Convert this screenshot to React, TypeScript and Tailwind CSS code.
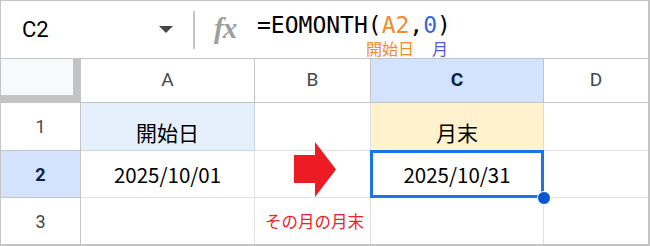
import React from 'react';

const ui = { fontFamily: 'Roboto, "Liberation Sans", sans-serif' };
const cjk = { fontFamily: '"Noto Sans CJK JP", sans-serif' };

function ColHead({ label, active }: { label: string; active?: boolean }) {
  return (
    <div
      className={`flex items-center justify-center border-r border-b border-[#c4c4c4] text-[19px] ${
        active ? 'bg-[#d3e3fd] font-bold text-[#0b1f4d]' : 'bg-white text-[#444746]'
      }`}
      style={ui}
    >
      {label}
    </div>
  );
}

function RowHead({ label, active }: { label: string; active?: boolean }) {
  return (
    <div
      className={`flex items-center justify-center border-r border-b border-[#c4c4c4] text-[18px] ${
        active ? 'bg-[#d3e3fd] font-bold text-[#0b1f4d]' : 'bg-white text-[#444746]'
      }`}
      style={ui}
    >
      {label}
    </div>
  );
}

export default function App() {
  const row = 'grid grid-cols-[80px_174px_116px_173px_1fr]';
  return (
    <div className="w-[650px] h-[246px] bg-white border-t border-l border-r-2 border-b-2 border-[#c4c4c4] overflow-hidden">
      {/* formula bar */}
      <div className="h-[58px] flex items-center border-b border-[#c4c4c4]">
        <div className="w-[192px] pl-[21px] pr-[20px] flex items-center justify-between">
          <span className="text-[22px] text-black" style={ui}>C2</span>
          <svg width="14" height="8" viewBox="0 0 14 8">
            <polygon points="0,0 14,0 7,7" fill="#444746" />
          </svg>
        </div>
        <div className="w-[2px] h-[38px] bg-[#c4c4c4]" />
        <div
          className="ml-[19px] w-[38px] text-[29px] italic font-bold text-[#9e9e9e] leading-none -mt-[2px] tracking-[-1px]"
          style={{ fontFamily: '"Liberation Serif", serif' }}
        >
          fx
        </div>
        <div className="ml-[5px] flex flex-col pt-[10px]">
          <div className="text-[23px] leading-[26px] text-black" style={{ fontFamily: '"DejaVu Sans Mono", monospace' }}>
            =EOMONTH(<span className="text-[#f28b30]">A2</span>,<span className="text-[#3367d6]">0</span>)
          </div>
          <div className="flex text-[16px] leading-[20px] ml-[109px]" style={cjk}>
            <span className="text-[#f28b30]">開始日</span>
            <span className="ml-[18px] text-[#4f5bd5]">月</span>
          </div>
        </div>
      </div>

      {/* header row */}
      <div className={`${row} h-[44px]`}>
        <div className="bg-[#f8f9fa] border-r-[8px] border-b-[8px] border-[#c4c4c4]" />
        <ColHead label="A" />
        <ColHead label="B" />
        <ColHead label="C" active />
        <div className="flex items-center justify-center border-b border-[#c4c4c4] text-[19px] text-[#444746]" style={ui}>D</div>
      </div>

      {/* row 1 */}
      <div className={`${row} h-[48px]`}>
        <RowHead label="1" />
        <div className="flex items-end justify-center pb-[2px] bg-[#e6f0fc] border-r border-b border-[#c9d6e3] text-[21px] text-black" style={cjk}>
          開始日
        </div>
        <div className="border-r border-b border-[#e1e1e1]" />
        <div className="flex items-end justify-center pb-[2px] bg-[#fff2cc] border-r border-b border-[#e6dcc0] text-[21px] text-black" style={cjk}>
          月末
        </div>
        <div className="border-b border-[#e1e1e1]" />
      </div>

      {/* row 2 */}
      <div className={`${row} h-[47px]`}>
        <RowHead label="2" active />
        <div className="flex items-center justify-center border-r border-b border-[#e1e1e1] text-[20.5px] text-black" style={cjk}>
          2025/10/01
        </div>
        <div className="relative border-r border-b border-[#e1e1e1]">
          <svg className="absolute left-[39px] -top-[9px] z-10" width="42" height="56" viewBox="0 0 42 56">
            <polygon points="0,13 21,13 21,0 42,27.5 21,55 21,41 0,41" fill="#ed1c24" />
          </svg>
        </div>
        <div className="relative flex items-center justify-center border-r border-b border-[#e1e1e1] text-[20.5px] text-black" style={cjk}>
          2025/10/31
          <div className="absolute -left-px -top-px -right-px -bottom-px border-[3px] border-[#1a73e8]" />
          <div className="absolute -right-[8px] -bottom-[8px] w-[14px] h-[14px] rounded-full bg-[#0b57d0] border border-white z-10" />
        </div>
        <div className="border-b border-[#e1e1e1]" />
      </div>

      {/* row 3 */}
      <div className={`${row} h-[46px]`}>
        <div className="flex items-center justify-center border-r border-[#c4c4c4] text-[18px] text-[#444746]" style={ui}>3</div>
        <div className="border-r border-[#e1e1e1]" />
        <div className="flex items-center justify-center pl-[4px] text-[16.5px] text-[#e8232a] border-r border-[#e1e1e1] whitespace-nowrap" style={cjk}>
          その月の月末
        </div>
        <div className="border-r border-[#e1e1e1]" />
        <div />
      </div>
    </div>
  );
}
